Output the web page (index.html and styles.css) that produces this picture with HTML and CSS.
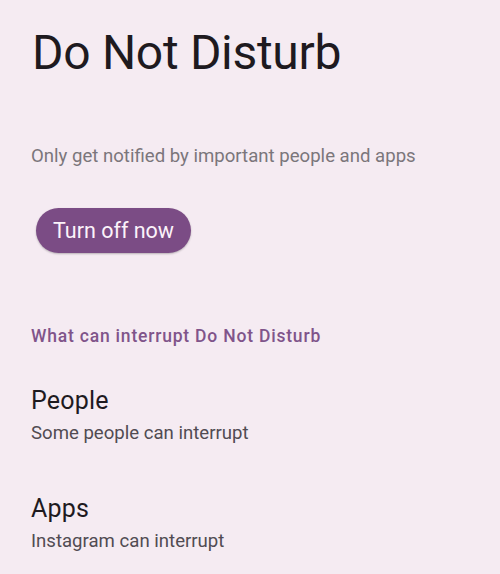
FILE: index.html
```html
<!DOCTYPE html>
<html>
<head>
<meta charset="utf-8">
<link rel="stylesheet" href="styles.css">
</head>
<body>
<div class="page">
  <h1 class="title">Do Not Disturb</h1>
  <p class="summary">Only get notified by important people and apps</p>
  <div class="actions"><button class="btn">Turn off now</button></div>
  <h2 class="section">What can interrupt Do Not Disturb</h2>
  <div class="item">
    <div class="item-title">People</div>
    <div class="item-sub">Some people can interrupt</div>
  </div>
  <div class="item">
    <div class="item-title">Apps</div>
    <div class="item-sub">Instagram can interrupt</div>
  </div>
</div>
</body>
</html>
```
FILE: styles.css
```css
html, body {
  margin: 0;
  padding: 0;
  background: #f5ebf2;
}
body {
  font-family: "Roboto", sans-serif;
  width: 500px;
  height: 574px;
  overflow: hidden;
}
.page {
  padding: 21px 0 0 31px;
  display: flex;
  flex-direction: column;
  align-items: flex-start;
}
.title {
  margin: 0 0 0 1px;
  font-weight: 400;
  font-size: 48px;
  line-height: 64px;
  color: #1e1a1f;
  letter-spacing: -0.3px;
}
.summary {
  margin: 59px 0 0 0;
  font-size: 18.6px;
  line-height: 24px;
  color: #7b767b;
}
.actions {
  margin-top: 40px;
  padding-left: 5px;
}
.btn {
  border: none;
  background: #7b4c85;
  color: #fbf3fa;
  font-family: "Roboto", sans-serif;
  font-size: 21.5px;
  height: 45px;
  padding: 0 17px;
  border-radius: 23px;
  box-shadow: 0 1px 2px rgba(0,0,0,0.25);
}
.section {
  margin: 71px 0 0 0;
  font-weight: 500;
  font-size: 17.5px;
  letter-spacing: 0.8px;
  line-height: 24px;
  color: #80548a;
}
.item {
  margin-top: 38px;
}
.item + .item {
  margin-top: 50px;
}
.item-title {
  font-size: 25px;
  letter-spacing: 0.2px;
  line-height: 30px;
  color: #1e1a1f;
}
.item-sub {
  margin-top: 6px;
  font-size: 18.6px;
  line-height: 22px;
  color: #514b52;
}
```
